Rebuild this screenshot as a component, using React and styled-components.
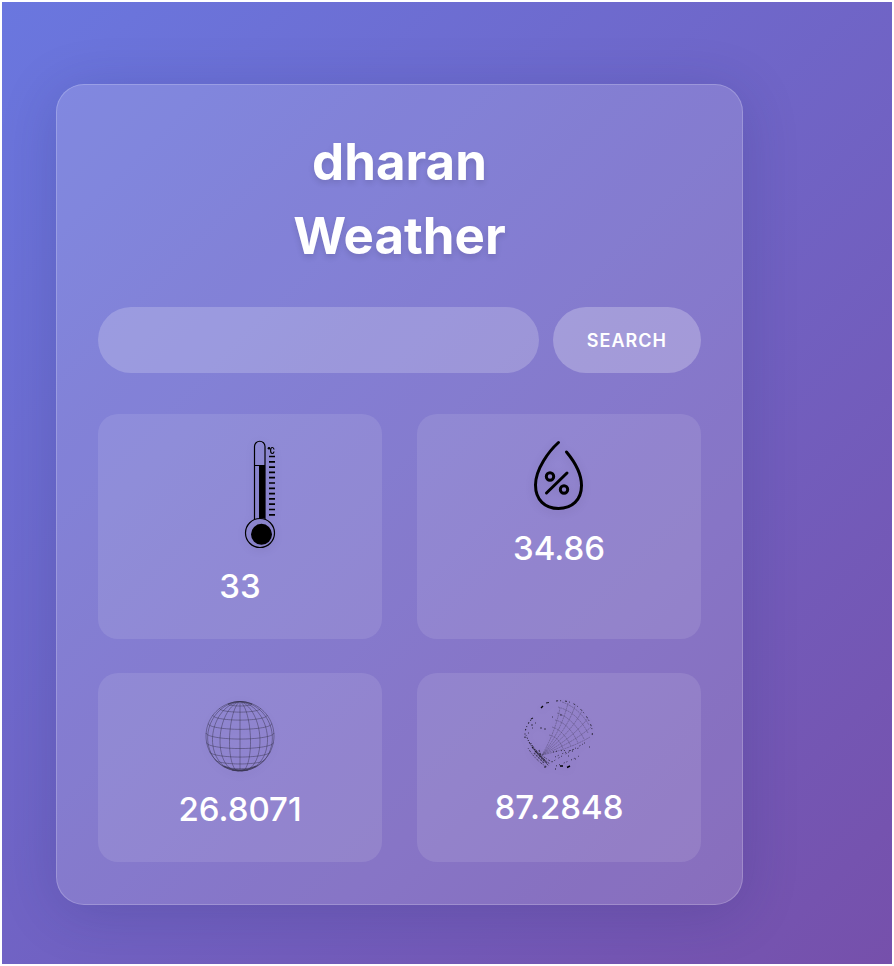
import React from "react";
import styled, { createGlobalStyle } from "styled-components";

const GlobalStyle = createGlobalStyle`
  *, *::before, *::after { box-sizing: border-box; }
  html { background: #fff; }
  body { margin: 0; padding: 2px; font-family: "Inter", "Liberation Sans", sans-serif; color: #fff; }
`;

const Page = styled.main`
  min-height: calc(100vh - 4px);
  padding: 82px 149px 59px 54px;
  background: linear-gradient(135deg, #6a77df 0%, #7650ab 100%);
`;

const Card = styled.section`
  padding: 40px 41px 42px;
  border: 1px solid rgba(255, 255, 255, 0.2);
  border-radius: 28px;
  background: rgba(255, 255, 255, 0.15);
  box-shadow: 0 8px 56px rgba(31, 38, 105, 0.2);
`;

const Title = styled.h1`
  max-width: 260px;
  margin: 0 auto 34px;
  font-size: 51px;
  font-weight: 700;
  line-height: 74px;
  text-align: center;
  text-shadow: 0 3px 6px rgba(0, 0, 0, 0.12);
`;

const SearchForm = styled.form`
  display: flex;
  gap: 14px;
  margin-bottom: 41px;
`;

const SearchInput = styled.input`
  flex: 1;
  min-width: 0;
  height: 66px;
  padding: 0 28px;
  border: 0;
  border-radius: 33px;
  background: rgba(255, 255, 255, 0.2);
  color: #fff;
  font: inherit;
  font-size: 18px;
`;

const SearchButton = styled.button`
  height: 66px;
  padding: 0 34px;
  border: 0;
  border-radius: 33px;
  background: rgba(255, 255, 255, 0.25);
  color: #fff;
  font: inherit;
  font-size: 18px;
  font-weight: 600;
  letter-spacing: 1px;
  cursor: pointer;
`;

const Tiles = styled.div`
  display: grid;
  grid-template-columns: 1fr 1fr;
  gap: 34px 35px;
`;

const Tile = styled.article`
  display: flex;
  flex-direction: column;
  align-items: center;
  padding: 27px;
  border-radius: 20px;
  background: rgba(255, 255, 255, 0.1);
`;

const Icon = styled.svg`
  display: block;
  width: ${(p) => p.$width}px;
  height: ${(p) => p.$height}px;
  margin-bottom: 12px;
  overflow: visible;
  filter: drop-shadow(0 2px 4px rgba(0, 0, 0, 0.1));
`;

const Value = styled.p`
  margin: 0;
  font-size: 33px;
  font-weight: 500;
  line-height: 51px;
`;

const rad = (deg) => (deg * Math.PI) / 180;
const TILT = 10;

function project(lat, lon) {
  const x = Math.cos(rad(lat)) * Math.sin(rad(lon));
  const y = Math.sin(rad(lat));
  const z = Math.cos(rad(lat)) * Math.cos(rad(lon));
  return {
    x: x * 34,
    y: -(y * Math.cos(rad(TILT)) - z * Math.sin(rad(TILT))) * 35,
    z: y * Math.sin(rad(TILT)) + z * Math.cos(rad(TILT)),
  };
}

function curve(points) {
  let pen = false;
  return points
    .map((p) => {
      if (p.z < -0.18) {
        pen = false;
        return "";
      }
      const command = pen ? "L" : "M";
      pen = true;
      return `${command}${p.x.toFixed(2)} ${p.y.toFixed(2)}`;
    })
    .join("");
}

const steps = (from, to, by) =>
  Array.from({ length: Math.round((to - from) / by) + 1 }, (_, i) => from + i * by);

const meridians = steps(-90, 90, 18).map((lon) =>
  curve(steps(-90, 90, 5).map((lat) => project(lat, lon)))
);
const parallels = steps(-59, 69, 16).map((lat) =>
  curve(steps(-90, 90, 5).map((lon) => project(lat, lon)))
);

function Thermometer() {
  return (
    <Icon $width={70} $height={108} viewBox="0 0 70 108" aria-hidden="true">
      <g fill="none" stroke="#000">
        <path d="M49.500 78V5.500a5.200 5.200 0 0 1 10.500 0V78M49.500 24.500h10.500" strokeWidth="1.200" />
        <circle cx="55" cy="92" r="14.500" strokeWidth="1.200" />
        <path d="M64 15.500h6M64 20.800h6M64 26.100h6M64 31.400h6M64 36.700h6M64 42h6M64 47.300h6M64 52.600h6M64 57.900h6M64 63.200h6M64 68.500h6M64 73.800h6" strokeWidth="1.700" />
        <path d="M69 8.500Q68.800 6.500 67.300 6.500Q65.600 6.500 65.600 9.500Q65.600 12.500 67.300 12.500Q68.800 12.500 69 10.500" strokeWidth="1.200" />
      </g>
      <path d="M54 24.500h6v53h-6z" />
      <circle cx="56.500" cy="93.300" r="10.500" />
      <circle cx="64" cy="7.300" r="1.300" />
    </Icon>
  );
}

function Humidity() {
  return (
    <Icon $width={70} $height={70} viewBox="0 0 70 70" aria-hidden="true">
      <g fill="none" stroke="#000" strokeWidth="3" strokeLinecap="round">
        <path d="M34.500 1.500C25 10 11.500 28 11.500 44C11.500 59 21 67.500 34.500 67.500S57.500 59 57.500 44.500C57.500 33 50 20 42.500 11" />
        <path d="M22.500 52L43 32" />
        <circle cx="26" cy="35.500" r="3.700" />
        <circle cx="40" cy="48.500" r="3.700" />
      </g>
    </Icon>
  );
}

function Latitude() {
  return (
    <Icon $width={70} $height={72} viewBox="-35 -36 70 72" aria-hidden="true">
      <g fill="none" stroke="#000" strokeWidth="0.500" opacity="0.600">
        {meridians.map((d, i) => <path key={`m${i}`} d={d} />)}
        {parallels.map((d, i) => <path key={`p${i}`} d={d} />)}
        <path d="M-12 -32Q0 -37 12 -32M-16 30Q0 38 16 30M-8 34Q0 36 8 34" strokeWidth="0.800" />
      </g>
    </Icon>
  );
}

function Longitude() {
  return (
    <Icon $width={70} $height={70} viewBox="0 0 70 70" aria-hidden="true">
      <g fill="none" stroke="#000" strokeWidth="0.600">
        <g opacity="0.380" strokeDasharray="2 0.600">
          <path d="M18 55Q31 33 36 8M18 55Q37 32 44 3M18 55Q42 32 51 6M18 55Q46 34 58 11M18 55Q49 38 64 18M18 55Q49 43 67 27M18 55Q46 49 66 37" />
          <path d="M38 2Q55 8 65 25M34 7Q53 12 64 33M33 13Q49 18 60 39M31 20Q45 23 54 43M28 27Q39 30 47 46M25 35Q35 37 39 49" />
        </g>
        <path d="M2 35Q7 49 25 66M4 40Q10 52 26 64M7 43Q13 54 28 62M4 48Q12 61 23 67" strokeDasharray="1 1.500 2 1" strokeWidth="0.900" opacity="0.600" />
        <path d="M8 47l14 15M11 51l13 13M10 53l10 10M15 50l3 9" strokeWidth="1.300" strokeDasharray="2 1" opacity="0.500" />
        <path d="M1 38L1 32Q3 23 9 18" strokeDasharray="1.500 2 1 3" strokeWidth="1.100" opacity="0.750" />
        <path d="M32 1Q49 -1 59 12Q70 25 68 37" strokeDasharray="2 2 1 4" strokeWidth="1" opacity="0.700" />
        <path d="M29 52Q41 49 52 52M31 57Q43 51 55 48M28 62Q41 54 59 44M32 66Q46 61 55 56" strokeDasharray="1 2 1 4" strokeWidth="1" opacity="0.700" />
        <path d="M17 8l2-2M36 66h3M43 67.500l3-1.500" strokeWidth="1.400" />
        <path d="M22 3l3-.5M20 67h2M7 19l2-1M31 69h1" strokeWidth="1.100" opacity="0.800" />
        <path d="M8 28h1M11 23h1M7 25h2M16 28h2M20 29h2M4 33h1M28 17h1M60 43h1M65 47h1M51 59h1M44 56h1M36 15h2" strokeWidth="1" opacity="0.600" />
      </g>
    </Icon>
  );
}

const readings = [
  { label: "Temperature", value: "33", Drawing: Thermometer },
  { label: "Humidity", value: "34.86", Drawing: Humidity },
  { label: "Latitude", value: "26.8071", Drawing: Latitude },
  { label: "Longitude", value: "87.2848", Drawing: Longitude },
];

export default function App() {
  return (
    <>
      <GlobalStyle />
      <Page>
        <Card>
          <Title>dharan Weather</Title>
          <SearchForm onSubmit={(e) => e.preventDefault()}>
            <SearchInput type="text" aria-label="City" />
            <SearchButton type="submit">SEARCH</SearchButton>
          </SearchForm>
          <Tiles>
            {readings.map(({ label, value, Drawing }) => (
              <Tile key={label} aria-label={label}>
                <Drawing />
                <Value>{value}</Value>
              </Tile>
            ))}
          </Tiles>
        </Card>
      </Page>
    </>
  );
}
